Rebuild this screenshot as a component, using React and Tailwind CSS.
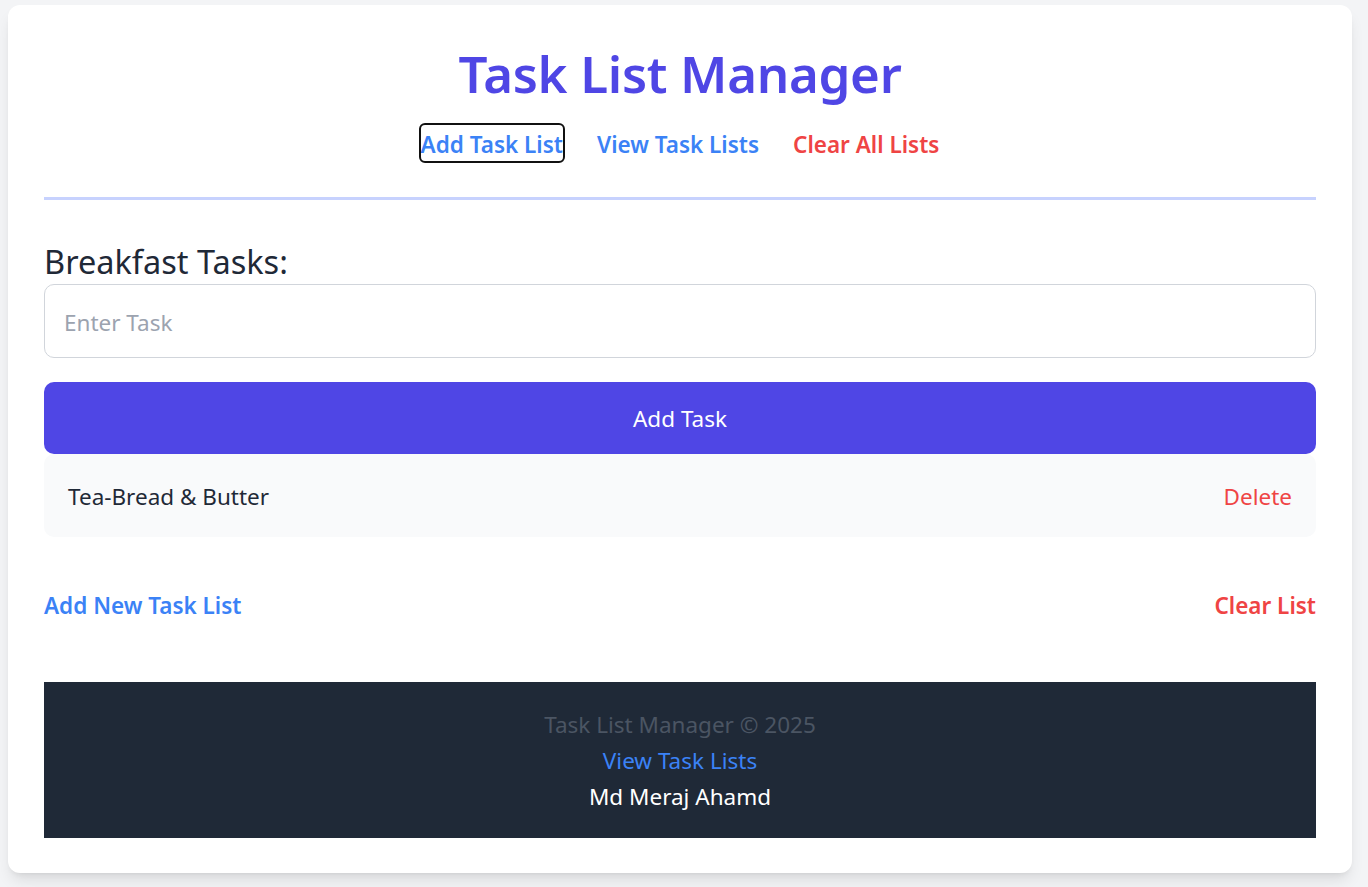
import { useState } from "react";

const App = () => {
  const [task, setTask] = useState("");
  const [tasks, setTasks] = useState(["Tea-Bread & Butter"]);

  const addTask = () => {
    if (!task.trim()) return;
    setTasks((prev) => [...prev, task.trim()]);
    setTask("");
  };

  const removeTask = (idx) => {
    setTasks((prev) => prev.filter((_, i) => i !== idx));
  };

  return (
    <div
      className="min-h-screen bg-[#f3f4f6] pt-[5px] pl-2 pr-4 pb-[14px]"
      style={{ fontFamily: '"Noto Sans", "Open Sans", sans-serif' }}
    >
      <div className="bg-white rounded-xl shadow-lg px-9 pt-9 pb-[35px] flex flex-col">
        <h1 className="text-center text-[51px] leading-[64px] font-semibold text-[#4f46e5] tracking-[-0.3px]">
          Task List Manager
        </h1>

        <nav className="flex justify-center items-center gap-[34px] mt-5 pb-9 border-b-[3px] border-[#c7d2fe]">
          <button className="h-9 pt-[3px] leading-[33px] text-[22.5px] font-semibold text-[#3b82f6] outline-2 outline-[#111] rounded-[4px]">
            Add Task List
          </button>
          <button className="h-9 pt-[3px] leading-[33px] text-[22.5px] font-semibold text-[#3b82f6]">
            View Task Lists
          </button>
          <button className="h-9 pt-[3px] leading-[33px] text-[22.5px] font-semibold text-[#ef4444]">
            Clear All Lists
          </button>
        </nav>

        <h2 className="mt-[42px] text-[32.5px] leading-10 text-[#1f2937]">Breakfast Tasks:</h2>

        <input
          value={task}
          onChange={(e) => setTask(e.target.value)}
          placeholder="Enter Task"
          className="mt-[2px] h-[74px] w-full px-[19px] pt-[2px] text-[22.5px] text-[#1f2937] placeholder:text-[#9ca3af] border border-[#d1d5db] rounded-[10px] outline-none"
        />

        <button
          onClick={addTask}
          className="mt-6 h-[72px] w-full pt-[2px] bg-[#4f46e5] text-white text-[22.5px] rounded-[10px]"
        >
          Add Task
        </button>

        <ul className="flex flex-col">
          {tasks.map((t, i) => (
            <li
              key={i}
              className="h-[83px] pt-[2px] flex items-center justify-between px-6 bg-[#f9fafb] rounded-[10px] text-[22.5px]"
            >
              <span className="text-[#1f2937]">{t}</span>
              <button onClick={() => removeTask(i)} className="text-[#ef4444]">
                Delete
              </button>
            </li>
          ))}
        </ul>

        <div className="mt-[55px] h-7 flex items-center justify-between text-[22.5px] font-semibold">
          <button className="text-[#3b82f6]">Add New Task List</button>
          <button onClick={() => setTasks([])} className="text-[#ef4444]">
            Clear List
          </button>
        </div>

        <footer className="mt-[62px] h-[156px] bg-[#1f2937] flex flex-col items-center justify-center text-[22.5px] leading-9 pt-[2px]">
          <p className="text-[#4b5563]">Task List Manager © 2025</p>
          <a href="#" className="text-[#3b82f6]">
            View Task Lists
          </a>
          <p className="text-white">Md Meraj Ahamd</p>
        </footer>
      </div>
    </div>
  );
};

export default App;
